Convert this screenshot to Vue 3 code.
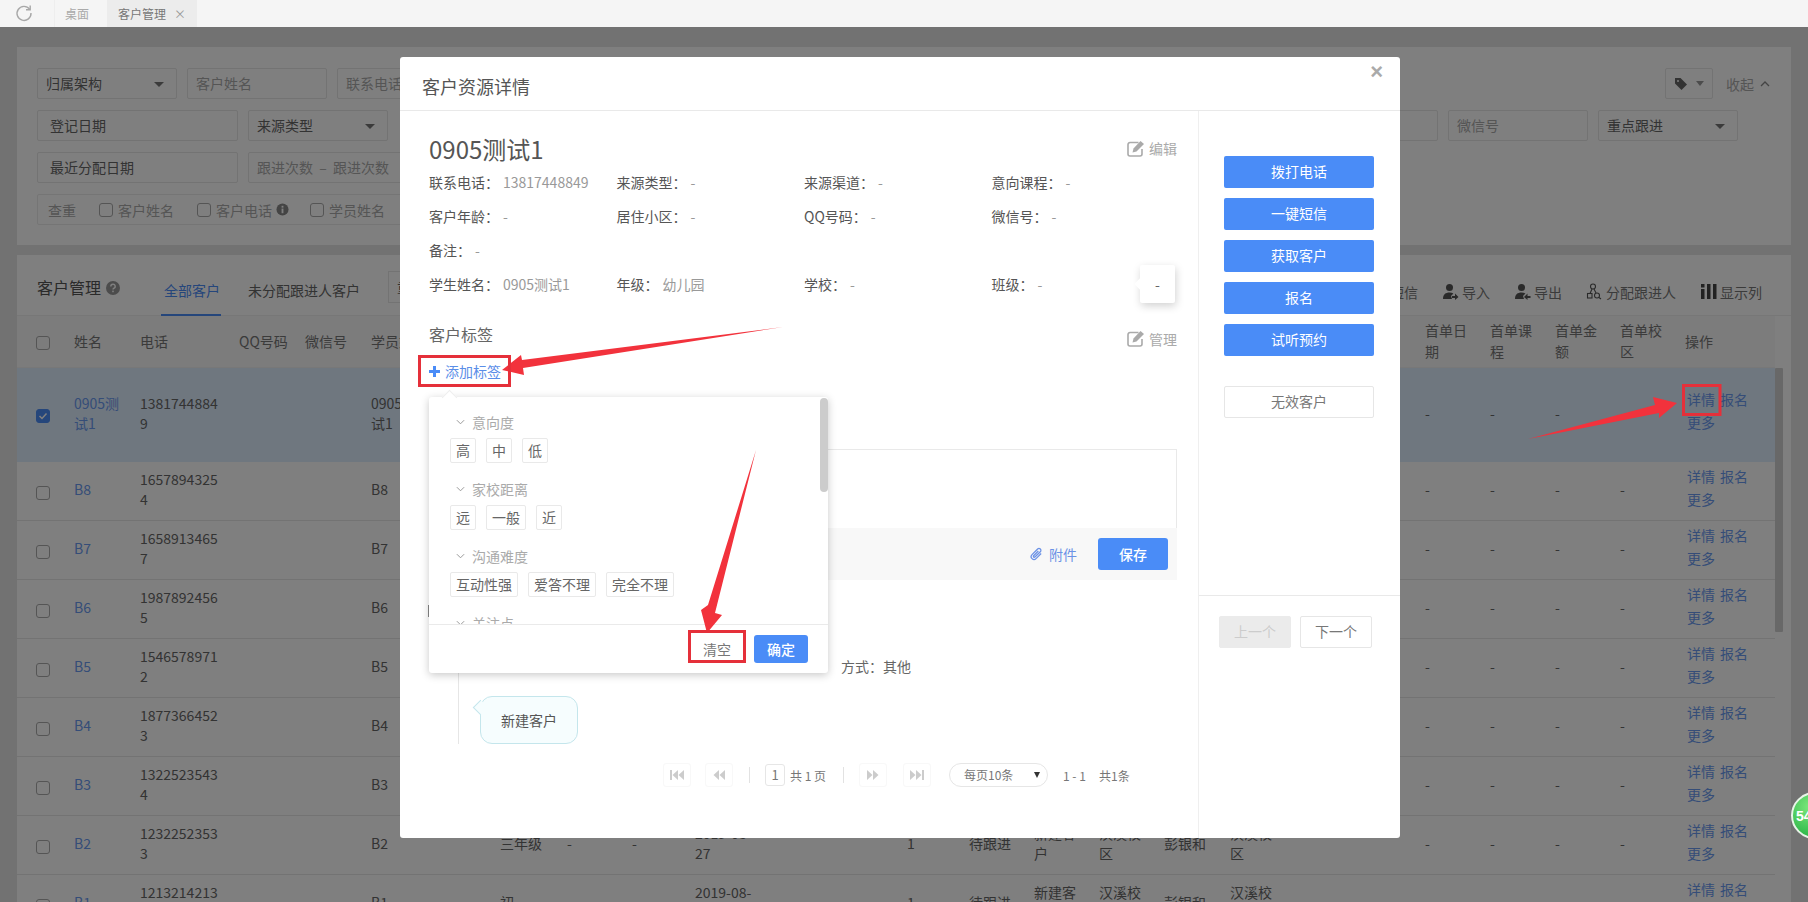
<script setup>
const row = (name, phone, extra = {}) => ({ name, phone, student: name, ...extra })
const follow = { grade: '', a: '', b: '', date: '', count: '1', status: '待跟进', src: '新建客户', campus: '汉溪校区', owner: '彭银和', campus2: '汉溪校区' }
const rows = [
  row('0905测试1', '13817448849', { selected: true }),
  row('B8', '16578943254'),
  row('B7', '16589134657'),
  row('B6', '19878924565'),
  row('B5', '15465789712'),
  row('B4', '18773664523'),
  row('B3', '13225235434'),
  row('B2', '12322523533', { ...follow, grade: '三年级', a: '-', b: '-', date: '2019-08-27' }),
  row('B1', '12132142133', { ...follow, grade: '初', date: '2019-08-27' })
]
const cols = [48, 66, 99, 66, 66, 65, 64, 67, 65, 63, 80, 132, 62, 65, 65, 65, 66, 65, 65, 65, 65, 65, 65, 65, 99]
const info = [
  ['联系电话：', '13817448849'], ['来源类型：', '-'], ['来源渠道：', '-'], ['意向课程：', '-'],
  ['客户年龄：', '-'], ['居住小区：', '-'], ['QQ号码：', '-'], ['微信号：', '-'],
  ['备注：', '-'], ['', ''], ['', ''], ['', ''],
  ['学生姓名：', '0905测试1'], ['年级：', '幼儿园'], ['学校：', '-'], ['班级：', '-']
]
const groups = [
  { title: '意向度', tags: ['高', '中', '低'] },
  { title: '家校距离', tags: ['远', '一般', '近'] },
  { title: '沟通难度', tags: ['互动性强', '爱答不理', '完全不理'] },
  { title: '关注点', tags: [] }
]
const sideButtons = ['拨打电话', '一键短信', '获取客户', '报名', '试听预约']
</script>

<template>
  <div class="root">
    <header class="topbar">
      <svg class="reload" viewBox="0 0 18 18" width="18" height="18">
        <path d="M14.6 5.2A7 7 0 1 0 16 9" fill="none" stroke="#a8a8a8" stroke-width="1.4" />
        <path d="M15.2 1.6v4.2H11" fill="none" stroke="#a8a8a8" stroke-width="1.4" />
      </svg>
      <div class="tab-item first">桌面</div>
      <div class="tab-item active">客户管理<span class="tab-x">×</span></div>
    </header>

    <main class="page">
      <section class="filters">
        <div class="f-row">
          <div class="fld w140 val">归属架构<i class="caret"></i></div>
          <div class="fld w140 ph">客户姓名</div>
          <div class="fld w140 ph">联系电话</div>
          <div class="spacer"></div>
          <div class="tagbtn">
            <svg viewBox="0 0 14 14" width="14" height="14"><path d="M1 1h5.500L13 7.500 7.500 13 1 6.500z" fill="#666" /><circle cx="4" cy="4" r="1" fill="#fff" /></svg>
            <i class="caret small"></i>
          </div>
          <div class="fold">收起
            <svg viewBox="0 0 10 6" width="10" height="6"><path d="M1 5l4-4 4 4" fill="none" stroke="#888" stroke-width="1.300" /></svg>
          </div>
        </div>
        <div class="f-row">
          <div class="fld w201 val pad">登记日期</div>
          <div class="fld w140 val">来源类型<i class="caret"></i></div>
          <div class="spacer"></div>
          <div class="fld w140 ph"></div>
          <div class="fld w140 ph">微信号</div>
          <div class="fld w140 val">重点跟进<i class="caret"></i></div>
          <div class="end-gap"></div>
        </div>
        <div class="f-row">
          <div class="fld w201 val pad">最近分配日期</div>
          <div class="fld w201 ph narrow">跟进次数&nbsp;&nbsp;–&nbsp;&nbsp;跟进次数</div>
        </div>
        <div class="f-row check-row">
          <span class="ck-title">查重</span>
          <span class="box"></span><span class="ck-text">客户姓名</span>
          <span class="box"></span><span class="ck-text">客户电话</span>
          <svg class="info-ic" viewBox="0 0 14 14" width="13" height="13"><circle cx="7" cy="7" r="6.500" fill="#888" /><rect x="6" y="6" width="2" height="5" fill="#fff" /><rect x="6" y="3" width="2" height="2" fill="#fff" /></svg>
          <span class="box"></span><span class="ck-text">学员姓名</span>
        </div>
      </section>

      <section class="grid-panel">
        <div class="toolbar">
          <h2 class="panel-title">客户管理</h2>
          <svg class="help" viewBox="0 0 14 14" width="14" height="14"><circle cx="7" cy="7" r="7" fill="#999" /><path d="M4.800 5.400A2.200 2.200 0 1 1 7.600 7.500c-.5.2-.6.5-.6 1.100" fill="none" stroke="#fff" stroke-width="1.400" /><rect x="6.200" y="9.600" width="1.600" height="1.600" fill="#fff" /></svg>
          <div class="t-tab on">全部客户</div>
          <div class="t-tab">未分配跟进人客户</div>
          <div class="t-box">重</div>
          <div class="spacer"></div>
          <div class="acts">
            <span class="act">短信</span>
            <span class="act">
              <svg viewBox="0 0 17 17" width="17" height="17"><circle cx="7.500" cy="4.500" r="3.500" fill="#555" /><path d="M1 16c0-4.500 2.600-6.500 6.500-6.500 1.600 0 2.900.3 3.900 1L9 13l1 3z" fill="#555" /><path d="M10 13h3v-2.500l3.500 3.500-3.500 3v-2h-3z" fill="#555" /></svg>导入
            </span>
            <span class="act">
              <svg viewBox="0 0 17 17" width="17" height="17"><circle cx="7.500" cy="4.500" r="3.500" fill="#555" /><path d="M1 16c0-4.500 2.600-6.500 6.500-6.500 1.600 0 2.900.3 3.900 1L9 13l1 3z" fill="#555" /><path d="M16.500 13h-3v-2.500L10 14l3.500 3v-2h3z" fill="#555" /></svg>导出
            </span>
            <span class="act">
              <svg viewBox="0 0 17 17" width="17" height="17" fill="none" stroke="#555" stroke-width="1.100"><circle cx="7" cy="3.500" r="2.500" /><rect x="1.500" y="10.500" width="4.500" height="4.500" /><circle cx="11" cy="12.500" r="2.500" /><path d="M6 6l-2 4.500M8 6l2 4M13 14.500l2 1.500" /></svg>分配跟进人
            </span>
            <span class="act">
              <svg viewBox="0 0 17 17" width="17" height="17" fill="#444"><rect x="1" y="1" width="3.500" height="3.500" /><rect x="1" y="6" width="3.500" height="10" /><rect x="7" y="1" width="3.500" height="15" /><rect x="13" y="1" width="3.500" height="15" /></svg>显示列
            </span>
          </div>
        </div>

        <div class="table-wrap">
          <table class="tbl">
            <colgroup><col v-for="(w, i) in cols" :key="i" :style="{ width: w + 'px' }" /></colgroup>
            <thead>
              <tr>
                <th class="c-check"><span class="box"></span></th>
                <th>姓名</th><th>电话</th><th class="nw">QQ号码</th><th class="nw">微信号</th><th class="nw">学员姓名</th>
                <th v-for="n in 14" :key="n"></th>
                <th>首单日期</th><th>首单课程</th><th>首单金额</th><th>首单校区</th><th>操作</th>
              </tr>
            </thead>
            <tbody>
              <tr v-for="r in rows" :key="r.name" :class="{ sel: r.selected }">
                <td class="c-check">
                  <span class="box" :class="{ checked: r.selected }">
                    <svg v-if="r.selected" viewBox="0 0 14 14" width="14" height="14"><path d="M3.500 7l2.500 2.500 4.500-5" fill="none" stroke="#fff" stroke-width="1.500" /></svg>
                  </span>
                </td>
                <td class="lnk">{{ r.name }}</td>
                <td class="brk">{{ r.phone }}</td>
                <td></td><td></td>
                <td>{{ r.student }}</td>
                <td></td>
                <td>{{ r.grade }}</td><td>{{ r.a }}</td><td>{{ r.b }}</td><td>{{ r.date }}</td>
                <td></td>
                <td>{{ r.count }}</td><td>{{ r.status }}</td><td>{{ r.src }}</td><td>{{ r.campus }}</td><td>{{ r.owner }}</td><td>{{ r.campus2 }}</td>
                <td></td><td></td>
                <td>-</td><td>-</td><td>-</td><td>-</td>
                <td class="ops"><a>详情</a><a>报名</a><a>更多</a></td>
              </tr>
            </tbody>
          </table>
          <div class="thumb"></div>
        </div>
      </section>

      <div class="overlay"></div>

      <div class="modal">
        <div class="m-head">客户资源详情<span class="m-close">×</span></div>
        <div class="m-body">
          <div class="m-left">
            <div class="name-row">
              <h1 class="cname">0905测试1</h1>
              <span class="edit">
                <svg viewBox="0 0 18 17" width="18" height="17"><path d="M11.500 2.500H3a2 2 0 0 0-2 2v9.500a2 2 0 0 0 2 2h10a2 2 0 0 0 2-2V9" fill="none" stroke="#aaa" stroke-width="1.600" /><path d="M5.500 12.500l1-4 7-7.500 3.500 3-7.500 7.500z" fill="#aaa" /></svg>编辑
              </span>
            </div>
            <div class="info-grid">
              <div v-for="(p, i) in info" :key="i" class="info-item"><span class="lab">{{ p[0] }}</span><span class="v">{{ p[1] }}</span></div>
            </div>
            <div class="tag-head">
              <span class="tag-title">客户标签</span>
              <span class="edit down">
                <svg viewBox="0 0 18 17" width="18" height="17"><path d="M11.500 2.500H3a2 2 0 0 0-2 2v9.500a2 2 0 0 0 2 2h10a2 2 0 0 0 2-2V9" fill="none" stroke="#aaa" stroke-width="1.600" /><path d="M5.500 12.500l1-4 7-7.500 3.500 3-7.500 7.500z" fill="#aaa" /></svg>管理
              </span>
            </div>
            <div class="add-tag">
              <svg viewBox="0 0 11 11" width="11" height="11"><path d="M4 0h3v4h4v3H7v4H4V7H0V4h4z" fill="#4a8cf7" /></svg>
              <span>添加标签</span>
            </div>
            <div class="editor">
              <div class="ed-area"></div>
              <div class="ed-foot">
                <span class="attach">
                  <svg viewBox="0 0 14 14" width="13" height="14"><path d="M12 6.500l-5.500 5.500a3 3 0 0 1-4.300-4.300l6-6a2 2 0 0 1 2.900 2.900L5.300 10.300a1 1 0 0 1-1.400-1.400L9 3.800" fill="none" stroke="#6c92e6" stroke-width="1.400" /></svg>附件
                </span>
                <span class="save">保存</span>
              </div>
            </div>
            <div class="tick"></div>
            <div class="timeline">
              <div class="tl-meta">方式：其他</div>
              <div class="bubble">新建客户</div>
            </div>
            <div class="pager">
              <span class="pg">
                <svg viewBox="0 0 16 12" width="16" height="12"><rect x="1" y="1" width="2" height="10" fill="#ccc" /><path d="M9 1v10L3.500 6zM15 1v10L9.500 6z" fill="#ccc" /></svg>
              </span>
              <span class="pg m14">
                <svg viewBox="0 0 14 12" width="14" height="12"><path d="M7 1v10L1.500 6zM13 1v10L7.500 6z" fill="#ccc" /></svg>
              </span>
              <span class="sep"></span>
              <span class="cur">1</span>
              <span class="pg-txt">共 1 页</span>
              <span class="sep"></span>
              <span class="pg">
                <svg viewBox="0 0 14 12" width="14" height="12"><path d="M1 1v10l5.500-5zM7 1v10l5.500-5z" fill="#ccc" /></svg>
              </span>
              <span class="pg m16">
                <svg viewBox="0 0 16 12" width="16" height="12"><path d="M1 1v10l5.500-5zM7 1v10l5.500-5z" fill="#ccc" /><rect x="13" y="1" width="2" height="10" fill="#ccc" /></svg>
              </span>
              <span class="pg-sel">每页10条<i class="mini"></i></span>
              <span class="pg-count">1 - 1</span>
              <span class="pg-total">共1条</span>
            </div>
          </div>
          <div class="m-right">
            <div class="r-top">
              <button v-for="b in sideButtons" :key="b" class="blue">{{ b }}</button>
              <button class="ghost">无效客户</button>
            </div>
            <div class="r-bottom">
              <button class="nav off">上一个</button>
              <button class="nav">下一个</button>
            </div>
          </div>
        </div>

        <div class="pop-card">-</div>

        <div class="popover">
          <div class="pop-scroll">
            <div v-for="g in groups" :key="g.title" class="pop-group">
              <div class="pop-title">
                <svg viewBox="0 0 10 6" width="9" height="6"><path d="M1 1l4 4 4-4" fill="none" stroke="#999" stroke-width="1.100" /></svg>
                {{ g.title }}
              </div>
              <div class="pop-tags"><span v-for="t in g.tags" :key="t" class="ptag">{{ t }}</span></div>
            </div>
          </div>
          <div class="pop-thumb"></div>
          <div class="pop-foot">
            <span class="clear">清空</span>
            <span class="ok">确定</span>
          </div>
        </div>
      </div>
    </main>

    <div class="badge"><span>54</span></div>

    <svg class="marks" viewBox="0 0 1808 902" width="1808" height="902">
      <g fill="#f2323c">
        <polygon points="502,370 521,355 522,360 783,327 523,368 524,375" />
        <polygon points="756,450 715,613 722,615 707,633 701,610 708,605" />
        <polygon points="1677,403 1653,397 1655,405 1528,439 1659,413 1659,418" />
      </g>
      <g fill="none" stroke="#e5303a" stroke-width="3">
        <rect x="419.500" y="356.500" width="90" height="29" />
        <rect x="689.500" y="631.500" width="55" height="30" />
        <rect x="1683.500" y="385.500" width="36.500" height="29" />
      </g>
    </svg>
  </div>
</template>

<style>
html, body { margin: 0; overflow: hidden; }
</style>

<style scoped>
.root {
  position: relative;
  width: 1808px;
  height: 902px;
  overflow: hidden;
  background: #e4e4e4;
  font-family: "Noto Sans CJK SC", "Noto Sans", sans-serif;
  font-size: 14px;
  color: #666;
}
.topbar {
  height: 27px;
  background: #f5f5f5;
  display: flex;
  align-items: stretch;
  font-size: 12px;
}
.reload { margin: 4px 0 0 15px; }
.tab-item { display: flex; align-items: center; }
.tab-item.first { margin-left: 21px; width: 53px; box-sizing: border-box; padding-left: 10px; color: #aaa; border-left: 1px solid #eee; }
.tab-item.active { width: 90px; box-sizing: border-box; padding-left: 11px; background: #ececec; color: #777; }
.tab-x { margin-left: 8px; font-size: 12px; color: #999; }

.page { position: relative; height: 875px; overflow: hidden; }
.overlay { position: absolute; inset: 0; background: rgba(0, 0, 0, 0.5); }

.filters {
  margin: 20px 17px 0;
  height: 198px;
  box-sizing: border-box;
  padding: 21px 20px 0;
  background: #fff;
  display: flex;
  flex-direction: column;
  gap: 11px;
}
.f-row { display: flex; height: 31px; gap: 10px; align-items: stretch; flex: none; }
.spacer { flex: 1; }
.end-gap { width: 23px; }
.fld {
  box-sizing: border-box;
  border: 1px solid #e6e6e6;
  border-radius: 2px;
  display: flex;
  align-items: center;
  padding: 0 0 2px 8px;
  position: relative;
}
.w140 { width: 140px; }
.w201 { width: 201px; }
.val { color: #666; }
.ph { color: #aaa; }
.pad { padding-left: 12px; }
.narrow { white-space: nowrap; overflow: hidden; }
.caret {
  position: absolute;
  right: 12px;
  top: 13px;
  border: 5px solid transparent;
  border-top-color: #777;
  border-bottom-width: 0;
}
.caret.small { position: static; margin-left: 8px; border-width: 5px 4px 0; border-top-color: #999; }
.tagbtn {
  width: 48px;
  box-sizing: border-box;
  border: 1px solid #e6e6e6;
  border-radius: 2px;
  display: flex;
  align-items: center;
  justify-content: center;
}
.fold { display: flex; align-items: center; gap: 6px; color: #aaa; margin: 0 1px 0 3px; }
.check-row {
  width: 1260px;
  box-sizing: border-box;
  border: 1px solid #eaeaea;
  border-radius: 2px;
  align-items: center;
  gap: 0;
  color: #aaa;
  padding-left: 10px;
}
.ck-title { width: 51px; }
.ck-text { margin-left: 5px; margin-right: 23px; }
.info-ic { margin: 0 21px 0 -19px; }
.box {
  display: inline-block;
  width: 14px;
  height: 14px;
  box-sizing: border-box;
  border: 1px solid #aaa;
  border-radius: 3px;
  vertical-align: middle;
}
.box.checked { background: #4a8cf7; border-color: #4a8cf7; }
.box svg { display: block; margin: -1px; }

.grid-panel {
  margin: 10px 17px 0;
  background: #fff;
  height: 660px;
  overflow: hidden;
}
.toolbar {
  height: 61px;
  box-sizing: border-box;
  border-bottom: 1px solid #eee;
  padding: 0 29px 0 20px;
  display: flex;
  align-items: center;
}
.panel-title { margin: 0 5px 0 0; font-size: 16px; font-weight: 400; color: #555; position: relative; top: 2px; }
.help { position: relative; top: 3px; }
.t-tab { font-size: 14px; height: 61px; line-height: 71px; color: #666; box-sizing: border-box; white-space: nowrap; }
.t-tab.on { margin-left: 41px; padding: 0 3px; width: 60px; color: #4a8cf7; border-bottom: 2px solid #4a8cf7; }
.t-tab:not(.on) { margin-left: 27px; }
.t-box {
  margin: 4px 0 0 28px;
  width: 100px;
  height: 32px;
  box-sizing: border-box;
  border: 1px solid #e6e6e6;
  padding-left: 8px;
  line-height: 30px;
}
.acts { display: flex; gap: 24px; align-items: center; margin-top: 13px; color: #777; }
.act { display: flex; align-items: center; gap: 3px; white-space: nowrap; }

.table-wrap { position: relative; width: 1758px; }
.tbl { table-layout: fixed; width: 1758px; border-collapse: collapse; }
.tbl th { background: #f8f8f8; font-weight: 400; color: #777; height: 51px; text-align: left; padding: 0 7px 0 9px; line-height: 21px; border-bottom: 1px solid #f0f0f0; box-sizing: border-box; }
.tbl th.nw { white-space: nowrap; }
.tbl td { height: 59px; padding: 0 7px 3px 9px; line-height: 20px; border-bottom: 1px solid #e6e6e6; box-sizing: border-box; color: #666; word-break: break-word; }
.tbl tr.sel td { height: 94px; background: #dfeeff; border-bottom-color: #dfeeff; }
.tbl .c-check { padding-left: 19px; padding-right: 0; padding-bottom: 0; }
.tbl .lnk { color: #6a9af0; }
.tbl .brk { word-break: break-all; }
.tbl .ops { padding: 0 0 6px 11px; line-height: 23px; }
.tbl .ops a { display: inline-block; color: #6a9af0; margin-right: 5px; }
.thumb {
  position: absolute;
  left: 1758px;
  top: 52px;
  width: 8px;
  height: 264px;
  background: #d0d0d0;
  border-radius: 1px;
}

.modal {
  position: absolute;
  left: 400px;
  top: 30px;
  width: 1000px;
  height: 781px;
  background: #fff;
  border-radius: 3px;
  display: flex;
  flex-direction: column;
}
.m-head {
  height: 54px;
  flex: none;
  box-sizing: border-box;
  border-bottom: 1px solid #e9e9e9;
  padding: 5px 0 0 22px;
  display: flex;
  align-items: center;
  font-size: 18px;
  color: #555;
  position: relative;
}
.m-close { position: absolute; right: 17px; top: 1px; font-family: "Liberation Sans", sans-serif; font-size: 22px; font-weight: 700; color: #aaa; line-height: 28px; }
.m-body { flex: 1; display: flex; min-height: 0; }
.m-left {
  width: 799px;
  flex: none;
  box-sizing: border-box;
  padding: 0 21px 0 29px;
  border-right: 1px solid #efefef;
}
.name-row { display: flex; justify-content: space-between; align-items: flex-start; margin-top: 21px; height: 33px; }
.cname { margin: 0; font-size: 24px; font-weight: 400; line-height: 34px; color: #555; }
.edit { display: inline-flex; align-items: center; gap: 4px; color: #aaa; height: 30px; margin-top: 1px; }
.edit.down { position: relative; top: 4px; }
.info-grid { display: grid; grid-template-columns: repeat(4, 187.5px); grid-auto-rows: 34px; line-height: 34px; }
.lab { color: #555; margin-right: 4px; }
.v { color: #999; }
.tag-head { display: flex; justify-content: space-between; align-items: center; margin-top: 16px; height: 34px; }
.tag-title { font-size: 16px; color: #666; }
.add-tag { height: 32px; margin-top: 4px; display: flex; align-items: center; gap: 5px; color: #5b8ee8; }
.editor { margin-top: 62px; }
.ed-area { height: 79px; box-sizing: border-box; border: 1px solid #e9e9e9; border-bottom: 0; }
.ed-foot { height: 52px; background: #f8f8f8; display: flex; align-items: center; justify-content: flex-end; padding-right: 9px; gap: 21px; }
.attach { display: inline-flex; align-items: center; gap: 6px; color: #6c92e6; }
.save { width: 70px; height: 32px; line-height: 32px; text-align: center; color: #fff; background: #4a8cf7; border-radius: 3px; font-weight: 500; }
.tick { width: 2px; height: 12px; margin: 25px 0 0 -1px; background: #888; }
.timeline { margin: 23px 0 0 29px; height: 104px; box-sizing: border-box; border-left: 1px solid #e6e6e6; padding-top: 11px; }
.tl-meta { height: 30px; line-height: 30px; margin-left: 382px; color: #666; }
.bubble {
  position: relative;
  width: 98px;
  height: 48px;
  margin: 15px 0 0 21px;
  box-sizing: border-box;
  border: 1px solid #c4e6ec;
  border-radius: 12px;
  background: #f6fdfe;
  color: #555;
  font-size: 14px;
  display: flex;
  align-items: center;
  justify-content: center;
}
.bubble::before {
  content: "";
  position: absolute;
  left: -6px;
  top: 5px;
  width: 10px;
  height: 10px;
  background: #f6fdfe;
  border-left: 1px solid #c4e6ec;
  border-bottom: 1px solid #c4e6ec;
  transform: rotate(45deg);
}
.pager { margin: 19px 0 0 234px; height: 24px; display: flex; align-items: center; font-size: 12px; color: #777; }
.pg {
  width: 28px;
  height: 24px;
  box-sizing: border-box;
  border: 1px solid #f8f8f8;
  border-radius: 3px;
  display: flex;
  align-items: center;
  justify-content: center;
}
.m14 { margin-left: 14px; }
.m16 { margin-left: 16px; }
.sep { width: 1px; height: 16px; background: #e2e2e2; margin: 0 15px 0 16px; }
.cur { width: 20px; height: 22px; box-sizing: border-box; border: 1px solid #e6e6e6; border-radius: 3px; text-align: center; line-height: 20px; font-size: 13px; }
.pg-txt { margin-left: 5px; width: 37px; white-space: nowrap; }
.pg-sel {
  margin-left: 18px;
  width: 99px;
  height: 24px;
  box-sizing: border-box;
  border: 1px solid #e6e6e6;
  border-radius: 12px;
  padding-left: 14px;
  line-height: 22px;
  position: relative;
}
.mini { position: absolute; right: 7px; top: 8px; border: 3px solid transparent; border-top: 6px solid #333; border-bottom: 0; }
.pg-count { margin-left: 15px; width: 36px; }

.m-right { flex: 1; display: flex; flex-direction: column; }
.r-top {
  height: 485px;
  box-sizing: border-box;
  border-bottom: 1px solid #e9e9e9;
  padding: 45px 0 0 25px;
  display: flex;
  flex-direction: column;
  gap: 10px;
}
button { font: inherit; border: 0; padding: 0 0 2px; }
.blue { width: 150px; height: 32px; background: #4a8cf7; color: #fff; border-radius: 2px; }
.ghost { width: 150px; height: 32px; margin-top: 20px; background: #fff; color: #777; border: 1px solid #e6e6e6; border-radius: 2px; box-sizing: border-box; }
.r-bottom { padding: 20px 0 0 20px; display: flex; gap: 9px; }
.nav { width: 72px; height: 32px; box-sizing: border-box; background: #fff; border: 1px solid #e6e6e6; color: #777; border-radius: 2px; }
.nav.off { background: #ebebeb; border-color: #ebebeb; color: #ccc; }

.pop-card {
  position: absolute;
  left: 740px;
  top: 208px;
  width: 35px;
  height: 38px;
  background: #fff;
  box-shadow: 1px 3px 8px rgba(0, 0, 0, 0.18);
  border-radius: 2px;
  display: flex;
  align-items: center;
  justify-content: center;
  color: #666;
}
.pop-card::before {
  content: "";
  position: absolute;
  left: -4px;
  top: 15px;
  width: 8px;
  height: 8px;
  background: #fff;
  transform: rotate(45deg);
}

.popover {
  position: absolute;
  left: 29px;
  top: 340px;
  width: 399px;
  height: 276px;
  background: #fff;
  box-shadow: 0 2px 8px rgba(0, 0, 0, 0.22);
  border-radius: 3px;
  display: flex;
  flex-direction: column;
}
.popover::before {
  content: "";
  position: absolute;
  left: 15px;
  top: -5px;
  width: 10px;
  height: 10px;
  background: #fff;
  border-left: 1px solid #eee;
  border-top: 1px solid #eee;
  transform: rotate(45deg);
}
.pop-scroll { height: 227px; flex: none; overflow: hidden; padding: 16px 0 0 21px; box-sizing: border-box; }
.pop-group { margin-bottom: 17px; }
.pop-title { height: 20px; box-sizing: border-box; padding: 0 0 2px 6px; display: flex; align-items: center; gap: 7px; color: #aaa; }
.pop-tags { display: flex; gap: 10px; margin-top: 5px; }
.ptag { height: 25px; box-sizing: border-box; border: 1px solid #e9e9e9; border-radius: 2px; padding: 0 5px; line-height: 23px; color: #666; }
.pop-thumb { position: absolute; right: 0; top: 1px; width: 8px; height: 94px; background: #ccc; border-radius: 4px; }
.pop-foot {
  height: 49px;
  border-top: 1px solid #eaeaea;
  box-sizing: border-box;
  padding: 10px 20px 0 0;
  display: flex;
  justify-content: flex-end;
  gap: 10px;
}
.clear { width: 54px; height: 28px; line-height: 28px; text-align: center; color: #777; }
.ok { width: 54px; height: 28px; line-height: 28px; text-align: center; color: #fff; background: #4a8cf7; border-radius: 3px; font-weight: 500; }

.badge {
  position: absolute;
  left: 1791px;
  top: 792px;
  width: 47px;
  height: 47px;
  box-sizing: border-box;
  border: 2px solid #e8f5e8;
  border-radius: 50%;
  background: radial-gradient(circle at 40% 30%, #7de87d, #2fb84a 75%);
  color: #fff;
  font-family: "Liberation Sans", sans-serif;
  font-weight: 700;
  font-size: 14px;
  display: flex;
  align-items: center;
  padding-left: 3px;
}
.marks { position: absolute; left: 0; top: 0; pointer-events: none; }
</style>
